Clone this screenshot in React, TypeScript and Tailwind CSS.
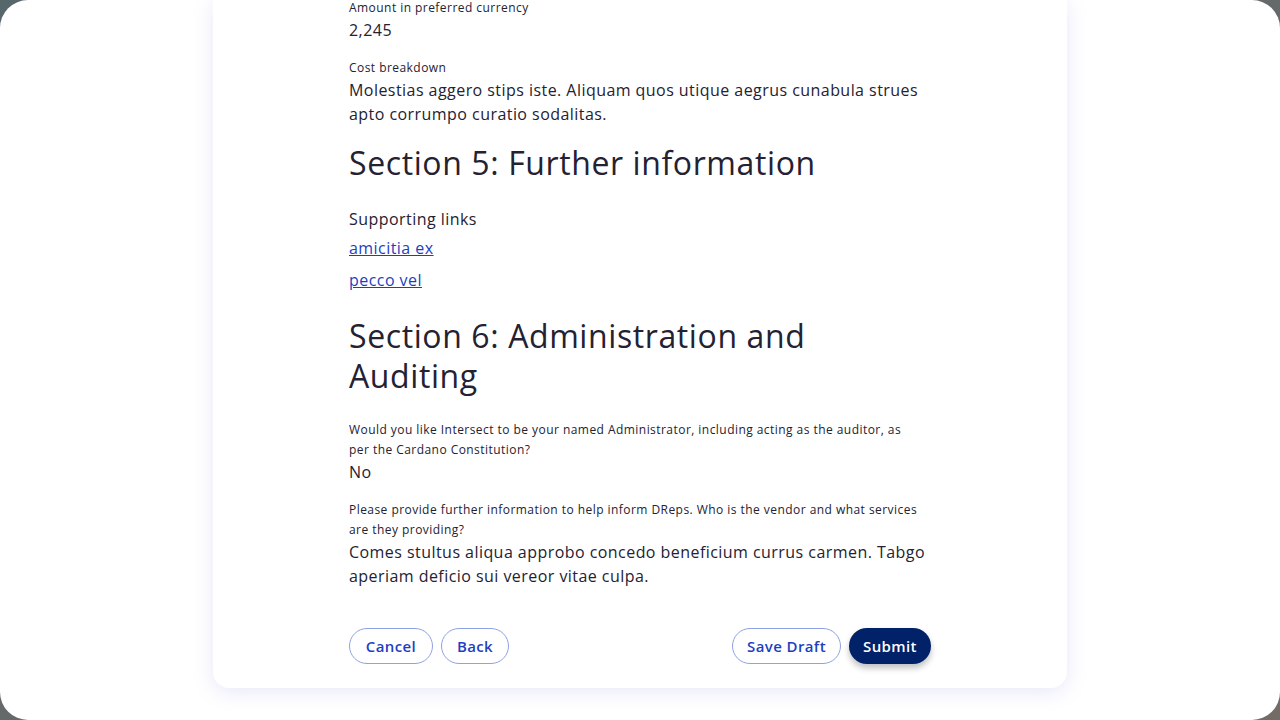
import React from "react";

const Label = ({ children, narrow }: { children: React.ReactNode; narrow?: boolean }) => (
  <p className={`text-[12px] leading-[20px] tracking-[0.45px] text-[#242232] ${narrow ? "max-w-[566px]" : ""}`}>{children}</p>
);
const Value = ({ children }: { children: React.ReactNode }) => (
  <p className="text-[16px] leading-[24px] tracking-[0.45px] text-[#242232]">{children}</p>
);

const Outline = ({ w, children }: { w: string; children: React.ReactNode }) => (
  <button className={`${w} h-[36px] rounded-full border border-[#8fa2e3] text-[15px] tracking-[0.4px] font-semibold text-[#1d3fbf] flex items-center justify-center`}>{children}</button>
);

export default function App() {
  return (
    <div className="h-[720px] w-[1280px] overflow-hidden bg-gradient-to-br from-[#56676c] to-[#736b66]" style={{ fontFamily: '"Open Sans", sans-serif' }}>
      <div className="h-full w-full rounded-[28px] bg-white overflow-hidden flex justify-center">
        <div className="w-[854px] h-[688px] bg-white rounded-b-[16px] shadow-[0_4px_20px_rgba(120,130,220,0.18)] px-[136px] pb-[24px] flex flex-col">
          <div className="-mt-[2px] flex flex-col gap-4">
            <div>
              <Label>Amount in preferred currency</Label>
              <Value>2,245</Value>
            </div>
            <div>
              <Label>Cost breakdown</Label>
              <Value>Molestias aggero stips iste. Aliquam quos utique aegrus cunabula strues apto corrumpo curatio sodalitas.</Value>
            </div>
          </div>
          <h2 className="mt-[17px] text-[32px] leading-[40px] tracking-[0.6px] text-[#242232]">Section 5: Further information</h2>
          <div className="mt-6">
            <Value>Supporting links</Value>
            <div className="mt-[5px] flex flex-col gap-2 items-start">
              <a href="#" className="text-[16px] leading-[24px] tracking-[0.45px] text-[#1d3fbf] underline">amicitia ex</a>
              <a href="#" className="text-[16px] leading-[24px] tracking-[0.45px] text-[#1d3fbf] underline">pecco vel</a>
            </div>
          </div>
          <h2 className="mt-6 text-[32px] leading-[40px] tracking-[0.6px] text-[#242232]">Section 6: Administration and Auditing</h2>
          <div className="mt-6 flex flex-col gap-4">
            <div>
              <Label narrow>Would you like Intersect to be your named Administrator, including acting as the auditor, as per the Cardano Constitution?</Label>
              <Value>No</Value>
            </div>
            <div>
              <Label>Please provide further information to help inform DReps. Who is the vendor and what services are they providing?</Label>
              <Value>Comes stultus aliqua approbo concedo beneficium currus carmen. Tabgo aperiam deficio sui vereor vitae culpa.</Value>
            </div>
          </div>
          <div className="mt-auto flex items-center justify-between">
            <div className="flex gap-2">
              <Outline w="w-[84px]">Cancel</Outline>
              <Outline w="w-[68px]">Back</Outline>
            </div>
            <div className="flex gap-2">
              <Outline w="w-[109px]">Save Draft</Outline>
              <button className="w-[82px] h-[36px] rounded-full bg-[#012169] text-[15px] tracking-[0.4px] font-semibold text-white shadow-[0_4px_6px_rgba(0,0,0,0.25)] flex items-center justify-center">Submit</button>
            </div>
          </div>
        </div>
      </div>
    </div>
  );
}
